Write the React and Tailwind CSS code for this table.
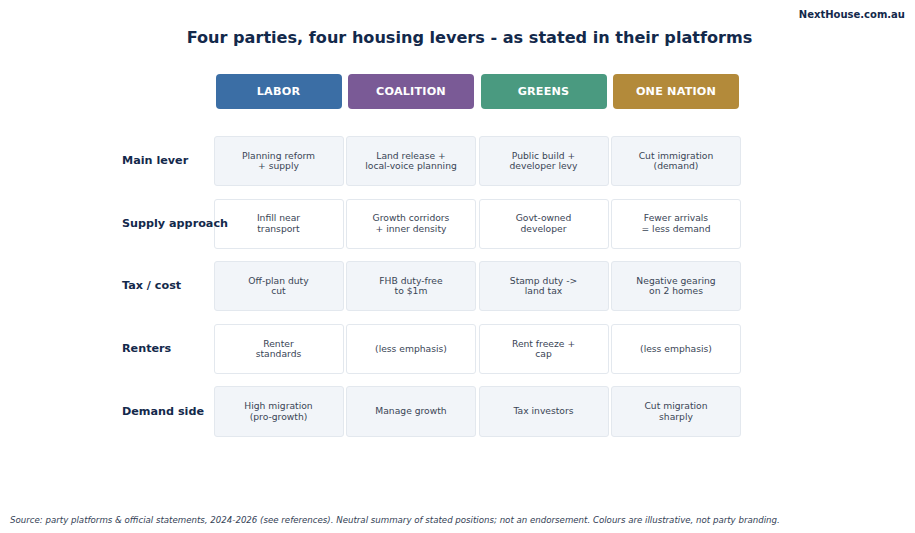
import React from "react";

const PARTIES = [
  { name: "LABOR", bg: "bg-[#3b6ea5]" },
  { name: "COALITION", bg: "bg-[#7a5a96]" },
  { name: "GREENS", bg: "bg-[#4a9a80]" },
  { name: "ONE NATION", bg: "bg-[#b38a3a]" },
];

const ROWS = [
  {
    label: "Main lever",
    cells: [
      ["Planning reform", "+ supply"],
      ["Land release +", "local-voice planning"],
      ["Public build +", "developer levy"],
      ["Cut immigration", "(demand)"],
    ],
  },
  {
    label: "Supply approach",
    cells: [
      ["Infill near", "transport"],
      ["Growth corridors", "+ inner density"],
      ["Govt-owned", "developer"],
      ["Fewer arrivals", "= less demand"],
    ],
  },
  {
    label: "Tax / cost",
    cells: [
      ["Off-plan duty", "cut"],
      ["FHB duty-free", "to $1m"],
      ["Stamp duty ->", "land tax"],
      ["Negative gearing", "on 2 homes"],
    ],
  },
  {
    label: "Renters",
    cells: [
      ["Renter", "standards"],
      ["(less emphasis)"],
      ["Rent freeze +", "cap"],
      ["(less emphasis)"],
    ],
  },
  {
    label: "Demand side",
    cells: [
      ["High migration", "(pro-growth)"],
      ["Manage growth"],
      ["Tax investors"],
      ["Cut migration", "sharply"],
    ],
  },
];

export default function App() {
  return (
    <div className="w-[915px] h-[533px] bg-white flex flex-col font-['DejaVu_Sans',sans-serif] text-[#13294b]">
      <div className="flex justify-end pr-[10px] pt-[9px] h-[23px] text-[10px] leading-[12px] font-bold">
        NextHouse.com.au
      </div>
      {/* title */}
      <h1 className="text-center pl-[24px] text-[16.1px] leading-[20px] font-bold mt-[5px]">
        Four parties, four housing levers - as stated in their platforms
      </h1>

      <div className="pl-[122px] mt-[26px]">
        {/* header pills */}
        <div className="grid grid-cols-[89px_130px_130px_130px_130px] gap-x-[2.5px]">
          <div />
          {PARTIES.map((p) => (
            <div
              key={p.name}
              className={`mx-[2px] h-[35px] rounded-[4px] flex items-center justify-center pt-[1px] text-white font-bold text-[11.2px] tracking-[0.2px] ${p.bg}`}
            >
              {p.name}
            </div>
          ))}
        </div>

        {/* rows */}
        <div className="mt-[27px] flex flex-col gap-[12.3px]">
          {ROWS.map((row, i) => (
            <div
              key={row.label}
              className="grid grid-cols-[89px_130px_130px_130px_130px] gap-x-[2.5px] h-[50.3px]"
            >
              <div className="relative z-10 flex items-center pt-[1px] whitespace-nowrap text-[11.2px] font-bold">
                {row.label}
              </div>
              {row.cells.map((lines, j) => (
                <div
                  key={j}
                  className={`rounded-[3px] border border-[#e3e8ee] flex flex-col items-center justify-center text-[9.2px] leading-[10.4px] text-[#3a4556] ${
                    i % 2 === 0 ? "bg-[#f2f5f9]" : "bg-white"
                  }`}
                >
                  {lines.map((l) => (
                    <span key={l}>{l}</span>
                  ))}
                </div>
              ))}
            </div>
          ))}
        </div>
      </div>

      <div className="mt-auto mb-[7px] pl-[10px] text-[8.65px] leading-[12px] italic text-[#334155]">
        Source: party platforms &amp; official statements, 2024-2026 (see references). Neutral summary of stated positions; not an endorsement. Colours are illustrative, not party branding.
      </div>
    </div>
  );
}
